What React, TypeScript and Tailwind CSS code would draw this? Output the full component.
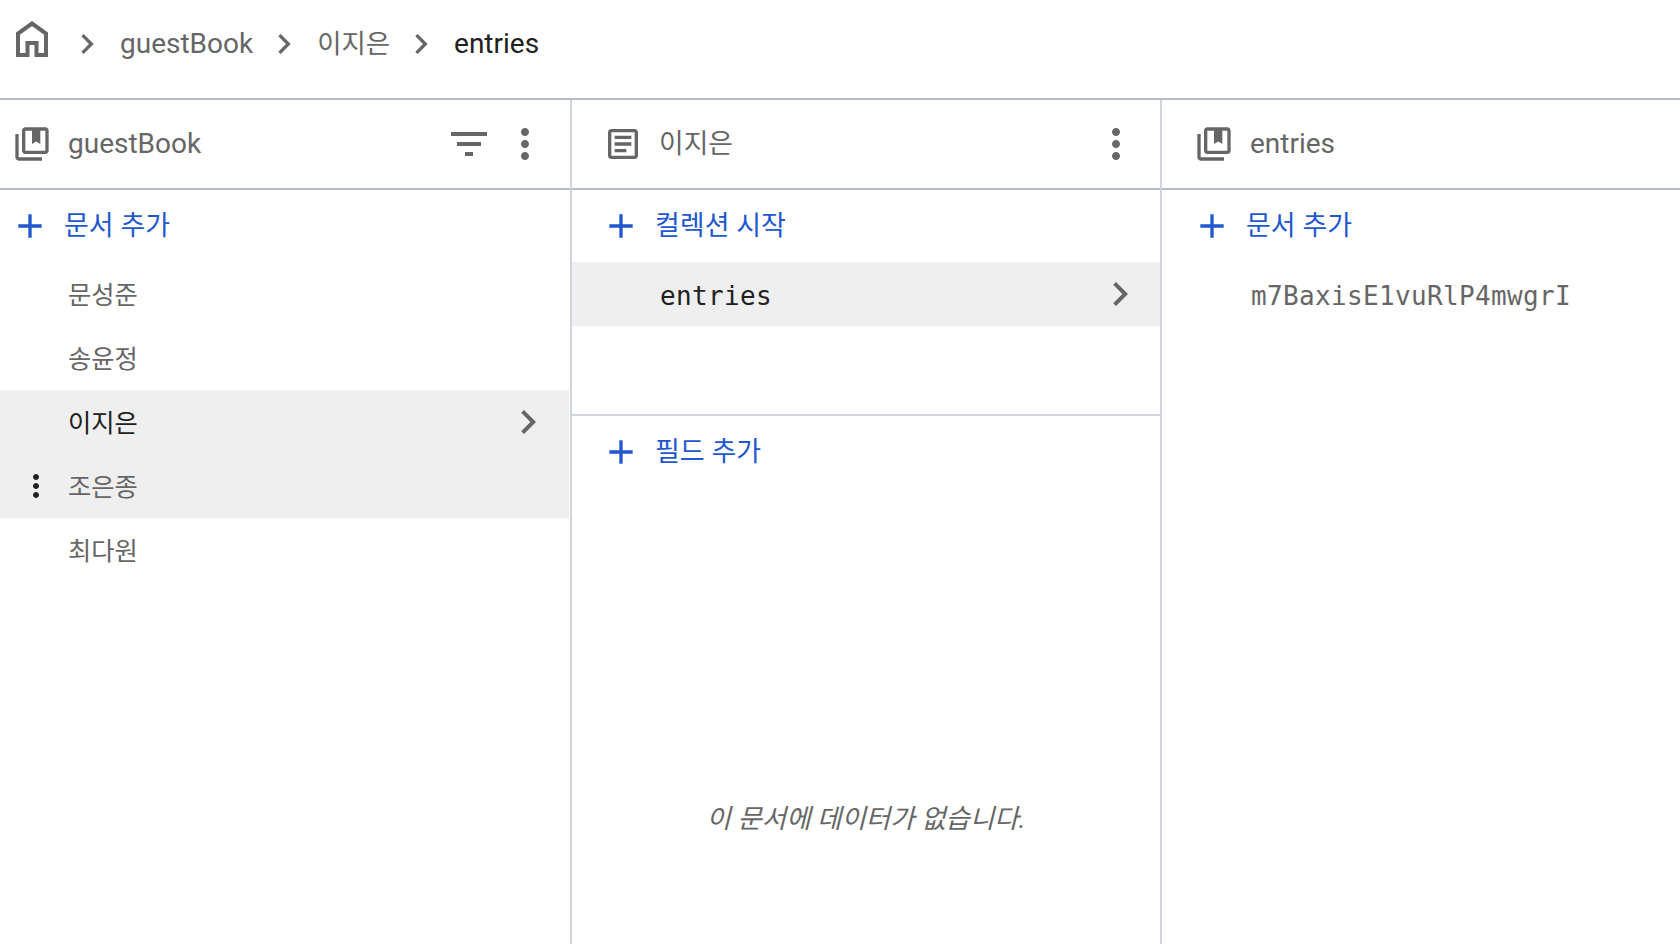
import React from "react";

const sans = "font-['Roboto','Noto_Sans_CJK_KR',sans-serif]";

const P = {
  collection: "M4 6H2v14c0 1.1.9 2 2 2h14v-2H4V6zm16-4H8c-1.1 0-2 .9-2 2v12c0 1.1.9 2 2 2h12c1.1 0 2-.9 2-2V4c0-1.1-.9-2-2-2zm0 14H8V4h4v8l2.5-1.5L17 12V4h3v12z",
  article: "M19 5v14H5V5h14m0-2H5c-1.1 0-2 .9-2 2v14c0 1.1.9 2 2 2h14c1.1 0 2-.9 2-2V5c0-1.1-.9-2-2-2zM14 17H7v-2h7v2zm3-4H7v-2h10v2zm0-4H7V7h10v2z",
  filter: "M10 18h4v-2h-4v2zM3 6v2h18V6H3zm3 7h12v-2H6v2z",
  more: "M12 8c1.1 0 2-.9 2-2s-.9-2-2-2-2 .9-2 2 .9 2 2 2zm0 2c-1.1 0-2 .9-2 2s.9 2 2 2 2-.9 2-2-.9-2-2-2zm0 6c-1.1 0-2 .9-2 2s.9 2 2 2 2-.9 2-2-.9-2-2-2z",
  chevron: "M10 6L8.59 7.41 13.17 12l-4.58 4.59L10 18l6-6z",
  add: "M19 13h-6v6h-2v-6H5v-2h6V5h2v6h6v2z",
};

function Icon({ d, className }: { d: string; className: string }) {
  return (
    <svg viewBox="0 0 24 24" fill="currentColor" className={`shrink-0 ${className}`}>
      <path d={d} />
    </svg>
  );
}

function Home() {
  return (
    <svg viewBox="0 0 32 36" className="w-8 h-9 shrink-0 text-[#666] mb-[10px]" fill="none" stroke="currentColor" strokeWidth="4">
      <path d="M2 34V12.5L16 2.5L30 12.5V34H20.5V22H11.5V34Z" />
    </svg>
  );
}

function Crumb({ children, dark, small }: { children: React.ReactNode; dark?: boolean; small?: boolean }) {
  return (
    <span className={`ml-px -mr-px ${small ? "text-[26.4px]" : "text-[28px]"} leading-none ${dark ? "text-[#212121]" : "text-[#666]"}`}>
      {children}
    </span>
  );
}

function Sep() {
  return <Icon d={P.chevron} className="w-10 h-10 text-[#666]" />;
}

function Header({ icon, title, children, pad, small }: { icon: string; title: string; children?: React.ReactNode; pad: string; small?: boolean }) {
  return (
    <div className={`h-[90px] border-b-2 border-[#b5bac8] flex items-center ${pad} shrink-0`}>
      <Icon d={icon} className="w-10 h-10 text-[#666]" />
      <span className={`ml-4 ${small ? "text-[26.8px]" : "text-[28px]"} text-[#666] leading-none flex-1`}>{title}</span>
      {children}
    </div>
  );
}

function AddRow({ label, pad }: { label: string; pad: string }) {
  return (
    <div className={`h-[72px] flex items-center ${pad} text-[#2257cf] shrink-0`}>
      <Icon d={P.add} className="w-10 h-10" />
      <span className="ml-[14px] text-[27px] leading-none">{label}</span>
    </div>
  );
}

function Row({ label, active, hover, mono, pad, chevronClass }: { label: string; active?: boolean; hover?: boolean; mono?: boolean; pad: string; chevronClass?: string }) {
  return (
    <div className={`h-16 relative flex items-center ${pad} ${active || hover ? "bg-[#efefef]" : ""}`}>
      {hover && <Icon d={P.more} className="w-9 h-9 text-[#212121] absolute left-[18px] top-[14px]" />}
      <span
        className={`flex-1 leading-none pt-1 ${mono ? "font-['DejaVu_Sans_Mono',monospace] text-[26px] tracking-[0.35px]" : "text-[25.3px]"} ${active ? "text-[#212121]" : "text-[#666]"}`}
      >
        {label}
      </span>
      {active && <Icon d={P.chevron} className={`w-12 h-12 text-[#666] ${chevronClass ?? "mr-4"}`} />}
    </div>
  );
}

export default function App() {
  return (
    <div className={`w-[1680px] h-[944px] bg-white overflow-hidden flex flex-col ${sans}`}>
      <div className="h-[100px] border-b-2 border-[#b5bac8] flex items-center pl-4 pb-[10px] shrink-0">
        <Home />
        <div className="ml-[19px] flex items-center gap-3">
          <Sep />
          <Crumb>guestBook</Crumb>
          <Sep />
          <Crumb small>이지은</Crumb>
          <Sep />
          <Crumb dark>entries</Crumb>
        </div>
      </div>
      <div className="flex flex-1 min-h-0">
        <section className="w-[572px] border-r-2 border-[#d0d4df] flex flex-col shrink-0">
          <Header icon={P.collection} title="guestBook" pad="pl-[12px] pr-[21px]">
            <Icon d={P.filter} className="w-12 h-12 text-[#666] mr-[8px]" />
            <Icon d={P.more} className="w-12 h-12 text-[#666]" />
          </Header>
          <AddRow label="문서 추가" pad="pl-[10px]" />
          <div className="flex flex-col pr-[1px]">
            <Row label="문성준" pad="pl-[68px]" />
            <Row label="송윤정" pad="pl-[68px]" />
            <Row label="이지은" active pad="pl-[68px]" chevronClass="mr-[17px]" />
            <Row label="조은종" hover pad="pl-[68px]" />
            <Row label="최다원" pad="pl-[68px]" />
          </div>
        </section>
        <section className="w-[590px] border-r-2 border-[#d0d4df] flex flex-col shrink-0">
          <Header icon={P.article} title="이지은" small pad="pl-[31px] pr-[20px]">
            <Icon d={P.more} className="w-12 h-12 text-[#666]" />
          </Header>
          <AddRow label="컬렉션 시작" pad="pl-[29px]" />
          <div className="h-[154px] shrink-0 border-b-2 border-[#d0d4df]">
            <Row label="entries" active mono pad="pl-[88px]" />
          </div>
          <AddRow label="필드 추가" pad="pl-[29px]" />
          <div className="flex-1 flex justify-center pt-[318px]">
            <span className="italic text-[26.5px] leading-none text-[#666]">이 문서에 데이터가 없습니다.</span>
          </div>
        </section>
        <section className="flex-1 flex flex-col min-w-0">
          <Header icon={P.collection} title="entries" pad="pl-[32px] pr-[20px]" />
          <AddRow label="문서 추가" pad="pl-[30px]" />
          <Row label="m7BaxisE1vuRlP4mwgrI" mono pad="pl-[89px]" />
        </section>
      </div>
    </div>
  );
}
